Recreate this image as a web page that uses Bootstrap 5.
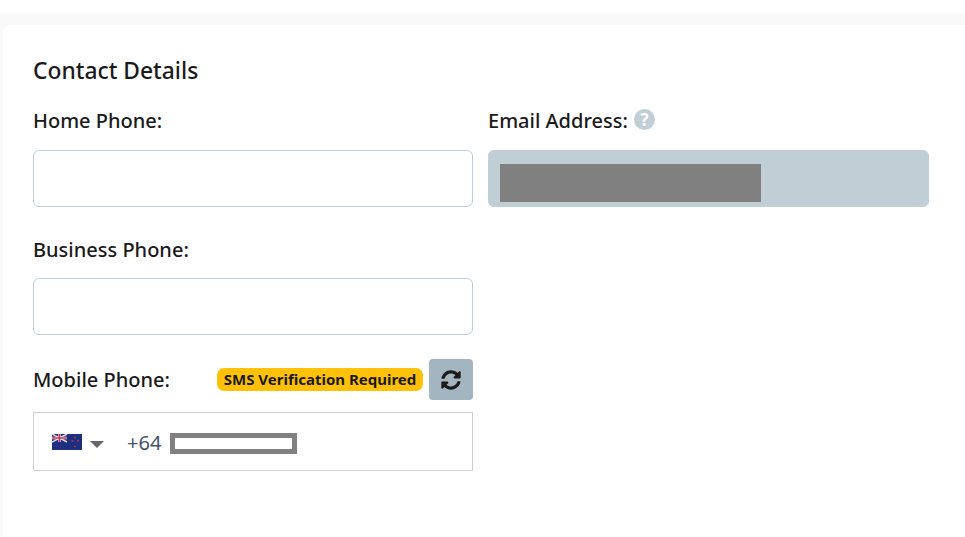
<!DOCTYPE html>
<html lang="en">
<head>
    <meta charset="UTF-8">
    <meta name="viewport" content="width=device-width, initial-scale=1.0">
    <title>Contact Details</title>
    <link href="https://cdn.jsdelivr.net/npm/bootstrap@5.3.0/dist/css/bootstrap.min.css" rel="stylesheet">
    <style>
        html, body { height: 100%; }
        body {
            background: #fff;
            padding-top: 13px;
            font-family: "Noto Sans", "Open Sans", "Liberation Sans", sans-serif;
            color: #1a1a1a;
            overflow: hidden;
        }
        .page-band { background: #f9f9f9; padding: 12px 0 0 3px; height: 100%; }
        .details-panel {
            background: #fff;
            border-radius: 8px 0 0 0;
            padding: 30px 36px 0 30px;
            height: 100%;
        }
        .panel-title { font-size: 22.8px; font-weight: 500; line-height: 32px; margin: 0 0 19px; }
        .form-cols { display: grid; grid-template-columns: 440px 441px; column-gap: 15px; }
        .field-label { font-size: 20px; font-weight: 500; line-height: 28px; padding-top: 1px; margin: 0 0 15px; display: flex; align-items: center; gap: 6px; }
        .text-field {
            height: 57px;
            border: 1px solid #c1ced6;
            border-radius: 6px;
        }
        .field-row { margin-bottom: 28px; }
        .field-row.tight { margin-bottom: 24px; }
        .field-row.tight .field-label { margin-bottom: 14px; }
        .text-field.is-locked { background: #c1ced6; padding: 13px 11px 5px; }
        .masked-email { display: block; width: 261px; height: 38px; background: #808080; }
        .mobile-head { display: flex; align-items: center; height: 41px; margin-bottom: 12px; }
        .mobile-head .field-label { margin: 0; }
        .sms-tag {
            background: #ffc107;
            color: #1a1a1a;
            font-size: 15px;
            font-weight: 700;
            border-radius: 7px;
            padding: 0;
            line-height: 23px;
            width: 206px;
            text-align: center;
            white-space: nowrap;
            margin-left: auto;
            margin-right: 6px;
        }
        .refresh-btn {
            width: 44px;
            height: 41px;
            padding: 0;
            background: #a3b5c0;
            border: 0;
            border-radius: 4px;
            display: flex;
            align-items: center;
            justify-content: center;
        }
        .phone-field {
            height: 59px;
            border: 1px solid #d0d0d0;
            display: flex;
            align-items: center;
            padding: 2px 0 0 18px;
            color: #43536b;
            font-size: 20px;
        }
        .nz-flag { display: block; width: 30px; height: 16px; margin-top: -1px; }
        .flag-caret {
            width: 0; height: 0;
            border-left: 7px solid transparent;
            border-right: 7px solid transparent;
            border-top: 7px solid #666;
            margin: 3px 23px 0 8px;
        }
        .masked-phone {
            width: 127px;
            height: 21px;
            border: 5px solid #808080;
            background: #fff;
            margin: 2px 0 0 9px;
        }
        .help-dot { display: block; margin-top: -3px; }
    </style>
</head>
<body>
    <div class="page-band">
        <div class="details-panel">
            <h2 class="panel-title">Contact Details</h2>
            <div class="form-cols">
                <div>
                    <div class="field-row">
                        <label class="field-label">Home Phone:</label>
                        <div class="text-field"></div>
                    </div>
                    <div class="field-row tight">
                        <label class="field-label">Business Phone:</label>
                        <div class="text-field"></div>
                    </div>
                    <div class="mobile-head">
                        <label class="field-label">Mobile Phone:</label>
                        <span class="sms-tag">SMS Verification Required</span>
                        <button type="button" class="refresh-btn" aria-label="Refresh">
                            <svg width="20" height="20" viewBox="0 0 512 512"><path fill="#1a1a1a" d="M370.7 133.3C339.5 104 298.9 88 255.8 88c-77.5.1-144.3 53.2-162.8 126.9-1.3 5.4-6.1 9.2-11.7 9.2H24.1c-7.5 0-13.2-6.8-11.8-14.2C33.9 94.9 134.8 8 256 8c66.4 0 126.8 26.1 171.3 68.7L463 41c15.1-15.1 41-4.4 41 17V192c0 13.3-10.7 24-24 24H345.9c-21.4 0-32.1-25.9-17-41l41.8-41.7zM32 296h134.1c21.4 0 32.1 25.9 17 41l-41.8 41.8c31.3 29.3 71.8 45.3 114.9 45.2 77.4-.1 144.3-53.1 162.8-126.8 1.3-5.4 6.1-9.2 11.7-9.2h57.3c7.5 0 13.2 6.8 11.8 14.2C478.1 417.1 377.2 504 256 504c-66.4 0-126.8-26.1-171.3-68.7L49 471c-15.1 15.1-41 4.4-41-17V320c0-13.3 10.7-24 24-24z"/></svg>
                        </button>
                    </div>
                    <div class="phone-field">
                        <svg class="nz-flag" viewBox="0 0 30 16">
                            <rect width="30" height="16" fill="#1f2f7f"/>
                            <path d="M0 0L15 8M15 0L0 8" stroke="#d8d8e4" stroke-width="1.5"/>
                            <path d="M7.5 0V8M0 4H15" stroke="#e8e8f0" stroke-width="2.5"/>
                            <path d="M7.5 0V8M0 4H15" stroke="#c8384a" stroke-width="1.5"/>
                            <circle cx="23" cy="3.5" r="1" fill="#a04058"/>
                            <circle cx="26" cy="6.5" r="1" fill="#a04058"/>
                            <circle cx="20.5" cy="7" r="1" fill="#a04058"/>
                            <circle cx="23" cy="12.5" r="1" fill="#a04058"/>
                        </svg>
                        <span class="flag-caret"></span>
                        <span>+64</span>
                        <span class="masked-phone"></span>
                    </div>
                </div>
                <div>
                    <div class="field-row">
                        <label class="field-label">Email Address:
                            <svg class="help-dot" width="21" height="21" viewBox="0 0 21 21">
                                <circle cx="10.5" cy="10.5" r="10.5" fill="#c1ced6"/>
                                <text x="10.5" y="16.5" text-anchor="middle" fill="#fff" font-size="17" font-weight="700" font-family="Noto Sans, sans-serif">?</text>
                            </svg>
                        </label>
                        <div class="text-field is-locked"><span class="masked-email"></span></div>
                    </div>
                </div>
            </div>
        </div>
    </div>
    <script src="https://cdn.jsdelivr.net/npm/bootstrap@5.3.0/dist/js/bootstrap.bundle.min.js"></script>
</body>
</html>
